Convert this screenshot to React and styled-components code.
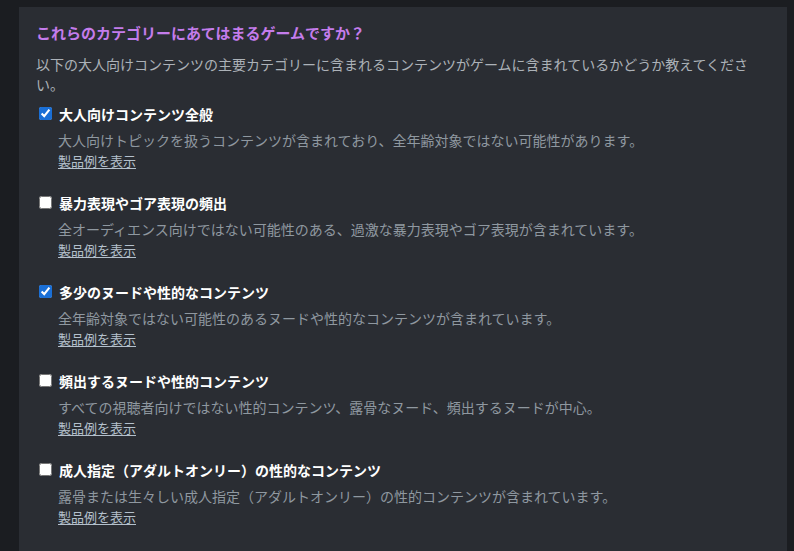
import React from "react";
import styled, { createGlobalStyle } from "styled-components";

const Global = createGlobalStyle`
  html, body {
    margin: 0;
    padding: 0;
    background: #1b1d21;
  }
  body {
    font-family: "Noto Sans CJK JP", "Noto Sans", sans-serif;
  }
`;

const Page = styled.div`
  padding-top: 7px;
  padding-left: 19px;
  width: 768px;
`;

const Panel = styled.section`
  background: #2a2d33;
  min-height: calc(100vh - 7px);
  box-sizing: border-box;
  padding: 16px 31px 0 17px;
`;

const Title = styled.h2`
  margin: 0;
  font-size: 15px;
  line-height: 20px;
  font-weight: 700;
  color: #c47ceb;
`;

const Intro = styled.p`
  margin: 11px 0 0;
  font-size: 14px;
  line-height: 20px;
  color: #acb2b8;
`;

const List = styled.div`
  margin-top: 10px;
  display: flex;
  flex-direction: column;
  gap: 23px;
`;

const Item = styled.div`
  display: flex;
  flex-direction: column;
`;

const Label = styled.label`
  display: flex;
  align-items: center;
  font-size: 14px;
  line-height: 20px;
  font-weight: 700;
  color: #ffffff;
  cursor: pointer;
`;

const Box = styled.input`
  width: 13px;
  height: 13px;
  margin: 0 7px 0 3px;
  position: relative;
  top: -1px;
  accent-color: #1a6fd6;
`;

const Desc = styled.div`
  margin: 6px 0 0 22px;
  font-size: 14px;
  line-height: 20px;
  color: #8f98a0;
`;

const Link = styled.a`
  margin: 2px 0 0 22px;
  align-self: flex-start;
  font-size: 13px;
  line-height: 18px;
  color: #b4c0cc;
  text-decoration: underline;
  text-underline-offset: 2px;
  cursor: pointer;
`;

const items = [
  {
    label: "大人向けコンテンツ全般",
    desc: "大人向けトピックを扱うコンテンツが含まれており、全年齢対象ではない可能性があります。",
    checked: true,
  },
  {
    label: "暴力表現やゴア表現の頻出",
    desc: "全オーディエンス向けではない可能性のある、過激な暴力表現やゴア表現が含まれています。",
    checked: false,
  },
  {
    label: "多少のヌードや性的なコンテンツ",
    desc: "全年齢対象ではない可能性のあるヌードや性的なコンテンツが含まれています。",
    checked: true,
  },
  {
    label: "頻出するヌードや性的コンテンツ",
    desc: "すべての視聴者向けではない性的コンテンツ、露骨なヌード、頻出するヌードが中心。",
    checked: false,
  },
  {
    label: "成人指定（アダルトオンリー）の性的なコンテンツ",
    desc: "露骨または生々しい成人指定（アダルトオンリー）の性的コンテンツが含まれています。",
    checked: false,
  },
];

export default function App() {
  return (
    <>
      <Global />
      <Page>
        <Panel>
          <Title>これらのカテゴリーにあてはまるゲームですか？</Title>
          <Intro>
            以下の大人向けコンテンツの主要カテゴリーに含まれるコンテンツがゲームに含まれているかどうか教えてください。
          </Intro>
          <List>
            {items.map((it, i) => (
              <Item key={i}>
                <Label>
                  <Box type="checkbox" defaultChecked={it.checked} />
                  {it.label}
                </Label>
                <Desc>{it.desc}</Desc>
                <Link>製品例を表示</Link>
              </Item>
            ))}
          </List>
        </Panel>
      </Page>
    </>
  );
}
